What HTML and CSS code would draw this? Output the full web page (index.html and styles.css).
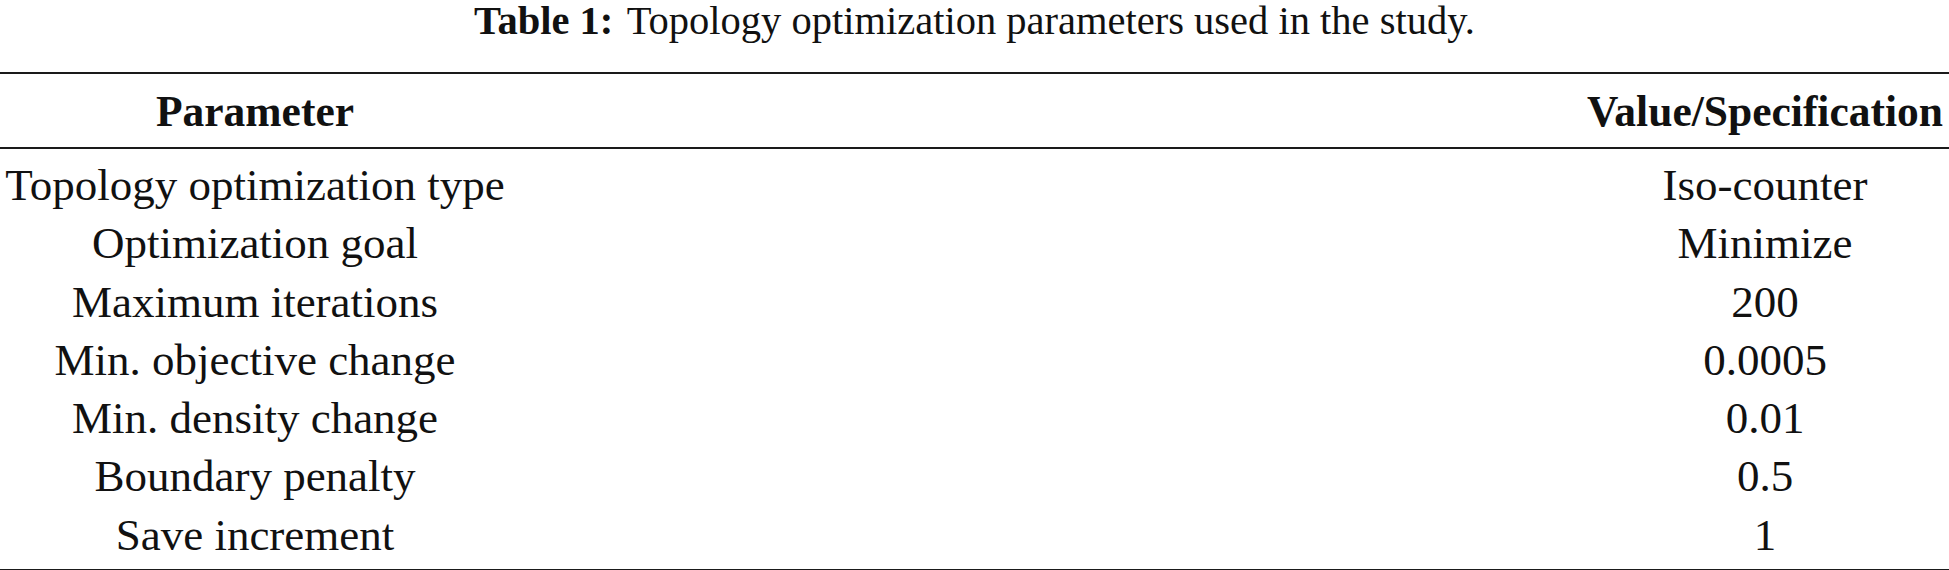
FILE: index.html
```html
<!DOCTYPE html>
<html lang="en">
<head>
<meta charset="utf-8">
<title>Table 1</title>
<link rel="stylesheet" href="styles.css">
</head>
<body>
<div class="wrap">
  <p class="caption"><b class="label">Table 1:</b> Topology optimization parameters used in the study.</p>
  <div class="table">
    <div class="row head">
      <div class="cell param">Parameter</div>
      <div class="cell value">Value/Specification</div>
    </div>
    <div class="body">
      <div class="row">
        <div class="cell param">Topology optimization type</div>
        <div class="cell value">Iso-counter</div>
      </div>
      <div class="row">
        <div class="cell param">Optimization goal</div>
        <div class="cell value">Minimize</div>
      </div>
      <div class="row">
        <div class="cell param">Maximum iterations</div>
        <div class="cell value">200</div>
      </div>
      <div class="row">
        <div class="cell param">Min. objective change</div>
        <div class="cell value">0.0005</div>
      </div>
      <div class="row">
        <div class="cell param">Min. density change</div>
        <div class="cell value">0.01</div>
      </div>
      <div class="row">
        <div class="cell param">Boundary penalty</div>
        <div class="cell value">0.5</div>
      </div>
      <div class="row">
        <div class="cell param">Save increment</div>
        <div class="cell value">1</div>
      </div>
    </div>
  </div>
</div>
</body>
</html>
```
FILE: styles.css
```css
* { box-sizing: border-box; }
html, body {
  margin: 0;
  padding: 0;
  background: #fff;
}
body {
  font-family: "Liberation Serif", "Times New Roman", serif;
  color: #111;
  width: 1949px;
  height: 570px;
  overflow: hidden;
}
.caption {
  margin: 0 0 30px;
  font-size: 40.5px;
  line-height: 42px;
  text-align: center;
  white-space: nowrap;
}
.caption .label {
  font-weight: bold;
  margin-right: 4px;
}
.table {
  border-top: 2px solid #1a1a1a;
  border-bottom: 2px solid #1a1a1a;
}
.row {
  display: grid;
  grid-template-columns: 510px 1fr 368px;
}
.cell {
  text-align: center;
  white-space: nowrap;
}
.cell.value { grid-column: 3; }
.head {
  border-bottom: 2px solid #1a1a1a;
  font-weight: bold;
  font-size: 43.5px;
  line-height: 72px;
  padding-top: 1px;
}
.body {
  padding: 7px 0 5px;
}
.body .row {
  font-size: 45px;
  line-height: 58.3px;
}
```
